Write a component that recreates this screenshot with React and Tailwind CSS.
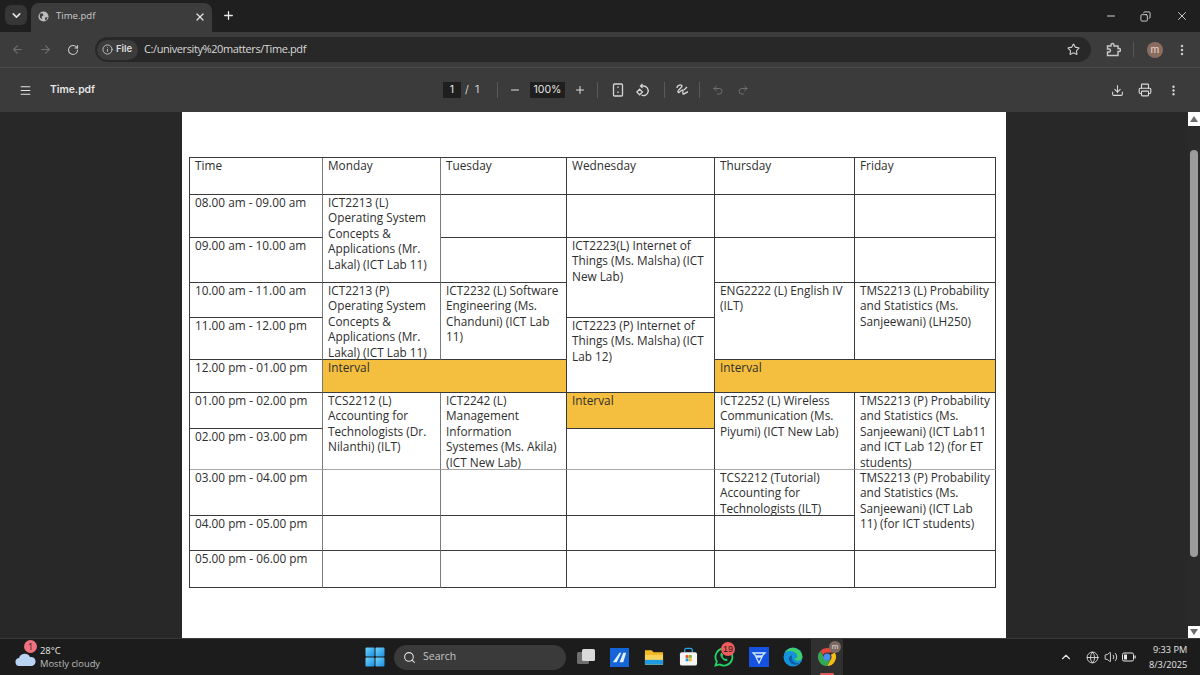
import React from "react";
import { ChevronDown, X, Plus, ArrowLeft, ArrowRight, RotateCw, Info, Star, EllipsisVertical, Menu, Minus, Undo2, Redo2, Download, Printer, Search, ChevronUp, Volume2, Globe, Copy } from "lucide-react";

const Y = "bg-[#f4bf3f]";
const L = "border-r-[#7a7a7a]";
const G = "border-b-[#a8a8a8]";
const C = ({ r, s = "", children }) => (
  <div className={`${r} ${s} min-w-0 border-r border-b border-[#3a3a3a] pl-[5px] pr-[2px] whitespace-pre-line overflow-hidden`}>{children}</div>
);

function Sep() {
  return <div className="w-px h-[16px] bg-[#5a5a5a]" />;
}

function Table() {
  return (
    <div className="grid grid-cols-[133px_118px_126px_148px_140px_141px] grid-rows-[37px_43px_45px_35px_42px_33px_36px_41px_46px_35px_37px] w-[807px] border-t border-l border-[#3a3a3a] text-[#2e2e2e] text-[11.8px] leading-[15.4px] font-['Open_Sans',sans-serif]">
      <C r="row-start-1 col-start-1" s={L}>Time</C>
      <C r="row-start-1 col-start-2" s={L}>Monday</C>
      <C r="row-start-1 col-start-3">Tuesday</C>
      <C r="row-start-1 col-start-4">Wednesday</C>
      <C r="row-start-1 col-start-5">Thursday</C>
      <C r="row-start-1 col-start-6">Friday</C>

      <C r="row-start-2 col-start-1" s={L}>08.00 am - 09.00 am</C>
      <C r="row-start-3 col-start-1" s={L}>09.00 am - 10.00 am</C>
      <C r="row-start-4 col-start-1" s={L}>10.00 am - 11.00 am</C>
      <C r="row-start-5 col-start-1" s={L}>11.00 am - 12.00 pm</C>
      <C r="row-start-6 col-start-1" s={L}>12.00 pm - 01.00 pm</C>
      <C r="row-start-7 col-start-1" s={L}>01.00 pm - 02.00 pm</C>
      <C r="row-start-8 col-start-1" s={`${L} ${G}`}>02.00 pm - 03.00 pm</C>
      <C r="row-start-9 col-start-1" s={L}>03.00 pm - 04.00 pm</C>
      <C r="row-start-10 col-start-1" s={L}>04.00 pm - 05.00 pm</C>
      <C r="row-start-11 col-start-1" s={L}>05.00 pm - 06.00 pm</C>

      <C r="row-start-2 row-span-2 col-start-2" s={L}>{"ICT2213 (L)\nOperating System\nConcepts &\nApplications (Mr.\nLakal) (ICT Lab 11)"}</C>
      <C r="row-start-4 row-span-2 col-start-2" s={L}>{"ICT2213 (P)\nOperating System\nConcepts &\nApplications (Mr.\nLakal) (ICT Lab 11)"}</C>
      <C r="row-start-6 col-start-2 col-span-2" s={Y}>Interval</C>
      <C r="row-start-7 row-span-2 col-start-2" s={`${L} ${G}`}>{"TCS2212 (L)\nAccounting for\nTechnologists (Dr.\nNilanthi) (ILT)"}</C>
      <C r="row-start-9 col-start-2" s={L} />
      <C r="row-start-10 col-start-2" s={L} />
      <C r="row-start-11 col-start-2" s={L} />

      <C r="row-start-2 col-start-3" />
      <C r="row-start-3 col-start-3" />
      <C r="row-start-4 row-span-2 col-start-3">{"ICT2232 (L) Software\nEngineering (Ms.\nChanduni) (ICT Lab\n11)"}</C>
      <C r="row-start-7 row-span-2 col-start-3" s={G}>{"ICT2242 (L)\nManagement\nInformation\nSystemes (Ms. Akila)\n(ICT New Lab)"}</C>
      <C r="row-start-9 col-start-3" />
      <C r="row-start-10 col-start-3" />
      <C r="row-start-11 col-start-3" />

      <C r="row-start-2 col-start-4" />
      <C r="row-start-3 row-span-2 col-start-4">{"ICT2223(L) Internet of\nThings (Ms. Malsha) (ICT\nNew Lab)"}</C>
      <C r="row-start-5 row-span-2 col-start-4">{"ICT2223 (P) Internet of\nThings (Ms. Malsha) (ICT\nLab 12)"}</C>
      <C r="row-start-7 col-start-4" s={Y}>Interval</C>
      <C r="row-start-8 col-start-4" s={G} />
      <C r="row-start-9 col-start-4" />
      <C r="row-start-10 col-start-4" />
      <C r="row-start-11 col-start-4" />

      <C r="row-start-2 col-start-5" />
      <C r="row-start-3 col-start-5" />
      <C r="row-start-4 row-span-2 col-start-5">{"ENG2222 (L) English IV\n(ILT)"}</C>
      <C r="row-start-6 col-start-5 col-span-2" s={Y}>Interval</C>
      <C r="row-start-7 row-span-2 col-start-5" s={G}>{"ICT2252 (L) Wireless\nCommunication (Ms.\nPiyumi) (ICT New Lab)"}</C>
      <C r="row-start-9 col-start-5">{"TCS2212 (Tutorial)\nAccounting for\nTechnologists (ILT)"}</C>
      <C r="row-start-10 col-start-5" />
      <C r="row-start-11 col-start-5" />

      <C r="row-start-2 col-start-6" />
      <C r="row-start-3 col-start-6" />
      <C r="row-start-4 row-span-2 col-start-6">{"TMS2213 (L) Probability\nand Statistics (Ms.\nSanjeewani) (LH250)"}</C>
      <C r="row-start-7 row-span-2 col-start-6" s={G}>{"TMS2213 (P) Probability\nand Statistics (Ms.\nSanjeewani) (ICT Lab11\nand ICT Lab 12) (for ET\nstudents)"}</C>
      <C r="row-start-9 row-span-2 col-start-6">{"TMS2213 (P) Probability\nand Statistics (Ms.\nSanjeewani) (ICT Lab\n11) (for ICT students)"}</C>
      <C r="row-start-11 col-start-6" />
    </div>
  );
}

function Win() {
  return (
    <svg width="20" height="20" viewBox="0 0 20 20" className="shrink-0">
      <defs><linearGradient id="w" x1="0" y1="0" x2="1" y2="1"><stop offset="0" stopColor="#6fd3fb" /><stop offset="1" stopColor="#1a8fe0" /></linearGradient></defs>
      <rect x="0.5" y="0.5" width="9" height="9" rx="1" fill="url(#w)" />
      <rect x="10.5" y="0.5" width="9" height="9" rx="1" fill="url(#w)" />
      <rect x="0.5" y="10.5" width="9" height="9" rx="1" fill="url(#w)" />
      <rect x="10.5" y="10.5" width="9" height="9" rx="1" fill="url(#w)" />
    </svg>
  );
}

function TaskIcons() {
  return (
    <>
      <svg width="20" height="20" viewBox="0 0 20 20" className="ml-[10px] shrink-0">
        <rect x="1" y="5" width="12" height="12" rx="1.5" fill="#6e6e6e" />
        <rect x="6" y="2" width="13" height="12" rx="1.5" fill="#d9d9d9" />
      </svg>
      <svg width="19" height="19" viewBox="0 0 20 20" className="ml-[14px] shrink-0">
        <rect width="20" height="20" fill="#1565d8" />
        <path d="M3 15 L10 5 H12 L7 15Z M10 15 L14 5 H17 L14 15Z" fill="#dff1ff" />
      </svg>
      <svg width="20" height="20" viewBox="0 0 21 20" className="ml-[15px] shrink-0">
        <path d="M1 3 H8 L10 5 H20 V18 H1Z" fill="#f2b825" />
        <rect x="1" y="8" width="19" height="10" fill="#fbd35a" />
        <rect x="1" y="13" width="19" height="5" fill="#1e9be0" />
      </svg>
      <svg width="19" height="20" viewBox="0 0 20 20" className="ml-[15px] shrink-0">
        <path d="M6 5 V3 a2 2 0 0 1 2 -2 h4 a2 2 0 0 1 2 2 V5" fill="none" stroke="#2aa7e8" strokeWidth="1.3" />
        <rect x="1" y="5" width="18" height="14" rx="2" fill="#f5f5f5" />
        <rect x="7" y="8" width="3" height="3" fill="#e8542c" />
        <rect x="10.5" y="8" width="3" height="3" fill="#7db72f" />
        <rect x="7" y="11.5" width="3" height="3" fill="#1c9be6" />
        <rect x="10.5" y="11.5" width="3" height="3" fill="#f7b71d" />
      </svg>
      <div className="relative ml-[16px] shrink-0 w-[20px] h-[20px]">
        <svg width="20" height="20" viewBox="0 0 20 20">
          <path d="M10 1.5 a8.5 8.5 0 0 0 -7.2 13 L1.5 18.5 l4.2 -1.1 A8.5 8.5 0 1 0 10 1.5Z" fill="none" stroke="#25d366" strokeWidth="1.8" />
          <path d="M7 6 C6 7 6 9 8 11.5 C10 14 12.5 14.5 13.8 13.5 L12.5 11.5 L11 12 C10 11.5 8.8 10.2 8.5 9 L9.2 8 L8 6Z" fill="#25d366" />
        </svg>
        <div className="absolute -top-[5px] left-[7px] w-[14px] h-[14px] rounded-full bg-[#ef5c5c] text-[#1c1c1c] text-[9px] leading-[14px] text-center font-['Liberation_Sans',sans-serif]">19</div>
      </div>
      <svg width="20" height="20" viewBox="0 0 20 20" className="ml-[15px] shrink-0">
        <rect width="20" height="20" fill="#1552e0" />
        <path d="M4 6 H16 L13 9 H7Z M7 10 H13 L10 16Z" fill="none" stroke="#cfe6ff" strokeWidth="1.3" />
      </svg>
      <svg width="20" height="20" viewBox="0 0 20 20" className="ml-[14px] shrink-0">
        <circle cx="10" cy="10" r="9.5" fill="#1592d8" />
        <path d="M19.5 10 a9.5 9.5 0 0 0 -18 -4 C4 3 12 3 14 8 c1 2.5 -1 4 -3 3.5 C13 15 19 14 19.5 10Z" fill="#3ecf6e" />
        <path d="M9 8.5 C6 8.5 5 12 7 15 C9 18 13 19 17 16 C12 17 8 14 9 8.5Z" fill="#0b5ea8" />
      </svg>
      <div className="relative ml-[8px] w-[32px] h-[37px] bg-[#303030] flex items-center justify-center shrink-0">
        <svg width="20" height="20" viewBox="0 0 20 20">
          <path d="M10 1 a9 9 0 0 1 7.8 4.5 H10 a4.5 4.5 0 0 0 -4 2.4 L3.3 4 A9 9 0 0 1 10 1Z" fill="#e8453c" />
          <path d="M17.8 5.5 A9 9 0 0 1 10 19 L13.9 12.3 A4.5 4.5 0 0 0 13.9 7.8 Z" fill="#f9bc15" />
          <path d="M10 19 A9 9 0 0 1 3.3 4 L6.9 10.2 A4.5 4.5 0 0 0 13.9 12.3Z" fill="#35a853" />
          <circle cx="10" cy="10" r="3.5" fill="#4a8bf5" />
        </svg>
        <div className="absolute top-[2px] left-[18px] w-[12px] h-[12px] rounded-full bg-[#7d6a63] text-[#e6dcd8] text-[8px] leading-[11px] text-center font-['Liberation_Sans',sans-serif]">m</div>
        <div className="absolute bottom-[1px] left-[9px] w-[14px] h-[2px] rounded bg-[#e05a5a]" />
      </div>
    </>
  );
}

export default function App() {
  return (
    <div className="w-[1200px] h-[675px] overflow-hidden flex flex-col bg-[#282828] font-['Inter',sans-serif] text-white">
      {/* tab strip */}
      <div className="h-[32px] shrink-0 bg-[#1f1f1f] flex items-end pl-[5px]">
        <div className="self-start mt-[5px] w-[22px] h-[20px] rounded-md bg-[#363636] flex items-center justify-center">
          <ChevronDown size={13} strokeWidth={3} className="text-[#e0e0e0]" />
        </div>
        <div className="ml-[4px] w-[181px] h-[29px] rounded-t-lg bg-[#3c3c3c] flex items-center pl-[7px] pr-[6px] pb-[2px]">
          <svg width="11" height="11" viewBox="0 0 12 12" className="shrink-0">
            <circle cx="6" cy="6" r="5.5" fill="#bdbdbd" />
            <path d="M2 3 L5 2.5 L6 4.5 L4 6 L4.5 9 L2 7Z M8 7 L10.5 6.5 L9 10 L7.5 9.5Z" fill="#3c3c3c" />
          </svg>
          <span className="ml-[7px] text-[9.6px] text-[#c9c9c9] flex-1 font-['Open_Sans',sans-serif]">Time.pdf</span>
          <X size={12} strokeWidth={2.6} className="text-[#e3e3e3]" />
        </div>
        <div className="ml-[10px] self-start mt-[9px]"><Plus size={13} strokeWidth={2.4} className="text-[#eaeaea]" /></div>
        <div className="ml-auto self-start mt-[9px] flex items-center">
          <Minus size={12} className="text-[#d5d5d5] -ml-[1px]" />
          <Copy size={11} className="ml-[23px] text-[#d5d5d5] -scale-x-100" />
          <X size={14} strokeWidth={1.5} className="ml-[24px] mr-[11px] text-[#e5e5e5]" />
        </div>
      </div>

      {/* toolbar */}
      <div className="h-[36px] shrink-0 bg-[#3c3c3c] flex items-center pl-[11px] border-b border-[#4c4c4c]">
        <ArrowLeft size={13} strokeWidth={2} className="text-[#6f6f6f]" />
        <ArrowRight size={13} strokeWidth={2} className="ml-[15px] text-[#6f6f6f]" />
        <RotateCw size={12} strokeWidth={2.2} className="ml-[15px] text-[#c7c7c7]" />
        <div className="ml-[16px] w-[996px] h-[25px] rounded-full bg-[#282828] flex items-center pl-[2px] pr-[11px]">
          <div className="w-[41px] h-[20px] rounded-full bg-[#3c3c3c] flex items-center pl-[5px]">
            <Info size={11} strokeWidth={1.8} className="text-[#d5d5d5]" />
            <span className="ml-[3px] text-[9.5px] font-semibold text-[#dcdcdc]">File</span>
          </div>
          <span className="ml-[6px] text-[11px] text-[#d8d8d8] font-['Open_Sans',sans-serif] tracking-[-0.4px]">C:/university%20matters/Time.pdf</span>
          <Star size={13} strokeWidth={2} className="ml-auto text-[#d5d5d5]" />
        </div>
        <svg width="15" height="15" viewBox="0 0 15 15" fill="none" stroke="#c8c8c8" strokeWidth="1.4" className="ml-[15px]">
          <path d="M1.5 4 H5 V3 a1.5 1.5 0 0 1 3 0 V4 H12 V6.5 H13 a1.5 1.5 0 0 1 0 3 H12 V13.5 H1.5 V10 H3 a1.5 1.5 0 0 0 0 -3 H1.5Z" />
        </svg>
        <div className="ml-[12px] w-px h-[15px] bg-[#555]" />
        <div className="ml-[13px] w-[16px] h-[16px] rounded-full bg-[#8b6d60] text-[#e8dcd6] text-[10px] leading-[15px] text-center">m</div>
        <EllipsisVertical size={14} strokeWidth={2.4} className="ml-[12px] text-[#c8c8c8]" />
      </div>

      {/* pdf toolbar */}
      <div className="h-[44px] shrink-0 bg-[#3b3b3b] flex items-center pl-[19px]">
        <Menu size={13} strokeWidth={2} className="text-[#e5e5e5]" />
        <span className="ml-[18px] text-[10.3px] font-semibold text-[#e5e5e5] w-[393px]">Time.pdf</span>
        <div className="w-[18px] h-[16px] bg-[#1f1f1f] text-[10.5px] leading-[16px] text-center text-[#e5e5e5]">1</div>
        <span className="ml-[4px] text-[10.5px] text-[#d5d5d5] w-[10px]">/</span>
        <span className="text-[10.5px] text-[#d5d5d5] w-[22px]">1</span>
        <Sep />
        <Minus size={12} strokeWidth={2} className="ml-[11px] text-[#e0e0e0]" />
        <div className="ml-[9px] w-[35px] h-[16px] bg-[#1f1f1f] text-[10.5px] leading-[16px] text-center text-[#e5e5e5]">100%</div>
        <Plus size={12} strokeWidth={2} className="ml-[9px] text-[#e0e0e0]" />
        <div className="ml-[11px]"><Sep /></div>
        <svg width="12" height="14" viewBox="0 0 12 14" fill="none" stroke="#d5d5d5" strokeWidth="1.3" className="ml-[14px]">
          <rect x="1.5" y="1" width="9" height="12" rx="1" />
          <path d="M6 3.5 v1.5 M6 8.5 v1.5" />
        </svg>
        <svg width="14" height="14" viewBox="0 0 14 14" fill="none" stroke="#d5d5d5" strokeWidth="1.3" className="ml-[12px]">
          <path d="M6.5 1 L4.5 3 L6.5 5" />
          <path d="M5 3 H7.5 A4.8 4.8 0 1 1 5.5 12.2" />
          <path d="M3.6 6.2 L6.4 9 L3.6 11.8 L0.8 9Z" />
        </svg>
        <div className="ml-[14px]"><Sep /></div>
        <svg width="14" height="14" viewBox="0 0 14 14" fill="none" stroke="#d5d5d5" strokeWidth="1.3" className="ml-[10px]">
          <path d="M2 5 C2 2 7 1 7 3 C7 5 2 7 3 9 C4 11 7 6 8 7 C8.5 8 7 11 8.5 11 C10 11 11 9 13 9" />
          <path d="M9 7 L12 4" />
        </svg>
        <div className="ml-[10px]"><Sep /></div>
        <Undo2 size={12} strokeWidth={1.7} className="ml-[12px] text-[#7a7a7a]" />
        <Redo2 size={12} strokeWidth={1.7} className="ml-[13px] text-[#7a7a7a]" />
        <Download size={13} strokeWidth={1.9} className="ml-[362px] text-[#dadada]" />
        <Printer size={14} strokeWidth={1.9} className="ml-[14px] text-[#dadada]" />
        <EllipsisVertical size={13} strokeWidth={2.4} className="ml-[15px] text-[#dadada]" />
      </div>

      {/* viewer */}
      <div className="flex-1 min-h-0 flex pl-[182px] overflow-hidden">
        <div className="w-[824px] bg-white pl-[7px] pt-[45px]">
          <Table />
        </div>
        <div className="ml-[182px] w-[12px] flex flex-col items-center bg-[#2a2a2a]">
          <div className="w-full h-[14px] bg-white flex items-center justify-center">
            <div className="w-0 h-0 border-x-[4px] border-x-transparent border-b-[6px] border-b-[#6b6b6b]" />
          </div>
          <div className="mt-[24px] w-[8px] h-[407px] rounded-full bg-[#9c9c9c]" />
          <div className="mt-auto w-full h-[12px] bg-white flex items-center justify-center">
            <div className="w-0 h-0 border-x-[4px] border-x-transparent border-t-[6px] border-t-[#6b6b6b]" />
          </div>
        </div>
      </div>

      {/* taskbar */}
      <div className="h-[37px] shrink-0 bg-[#1c1c1c] border-t border-[#3a3a3a] flex items-center pl-[15px] font-['Open_Sans',sans-serif]">
        <div className="relative w-[22px] h-[22px] shrink-0">
          <svg width="22" height="22" viewBox="0 0 22 22" className="absolute top-0 left-0">
            <path d="M5 20 a4 4 0 0 1 -1 -8 a6 6 0 0 1 11 -1 a4.5 4.5 0 0 1 2 9Z" fill="#b9d4f2" />
          </svg>
          <div className="absolute -top-[6px] left-[9px] w-[13px] h-[13px] rounded-full bg-[#f0717f] text-[#1c1c1c] text-[9px] leading-[13px] text-center">1</div>
        </div>
        <div className="ml-[3px] w-[316px] flex flex-col text-[9.4px] leading-[13px]">
          <span className="text-[#e8e8e8]">28°C</span>
          <span className="text-[#bdbdbd]">Mostly cloudy</span>
        </div>
        <div className="ml-[9px] flex items-center">
          <Win />
          <div className="ml-[9px] w-[172px] h-[25px] rounded-full bg-[#3a3a3a] flex items-center pl-[9px] shrink-0">
            <Search size={13} strokeWidth={2} className="text-[#e0e0e0]" />
            <span className="ml-[7px] text-[10.5px] text-[#c5c5c5]">Search</span>
          </div>
          <TaskIcons />
        </div>
        <ChevronUp size={14} strokeWidth={2} className="ml-[216px] text-[#e5e5e5]" />
        <Globe size={13} strokeWidth={1.6} className="ml-[13px] text-[#e5e5e5]" />
        <Volume2 size={14} strokeWidth={1.6} className="ml-[5px] text-[#e5e5e5]" />
        <svg width="14" height="10" viewBox="0 0 14 10" fill="none" className="ml-[4px]">
          <rect x="0.5" y="1" width="11" height="8" rx="1.5" stroke="#e5e5e5" />
          <rect x="2" y="2.5" width="3" height="5" fill="#e5e5e5" />
          <rect x="12.5" y="3.5" width="1.2" height="3" fill="#e5e5e5" />
        </svg>
        <div className="ml-[13px] flex flex-col items-end text-[9.2px] leading-[15px] text-[#e5e5e5]">
          <span>9:33 PM</span>
          <span>8/3/2025</span>
        </div>
      </div>
    </div>
  );
}
